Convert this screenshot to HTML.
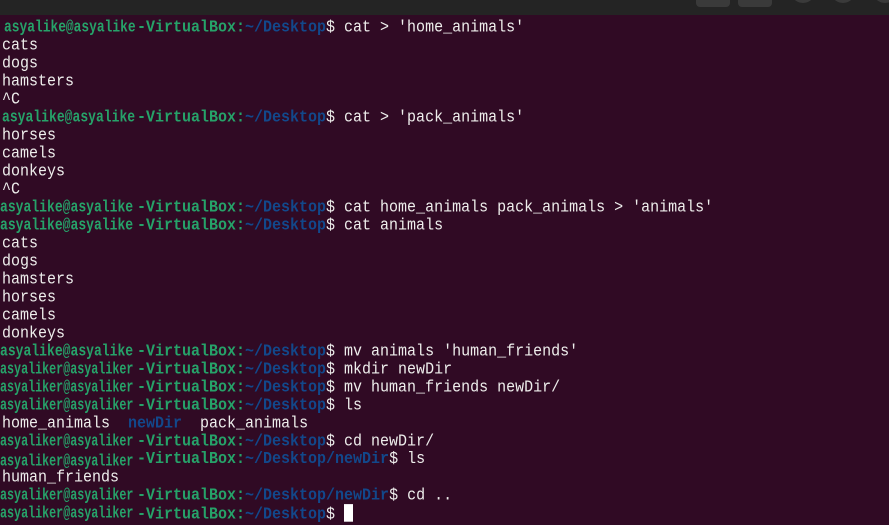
<!DOCTYPE html>
<html><head><meta charset="utf-8"><style>
html,body{margin:0;padding:0}
body{width:889px;height:523px;background:#300a24;overflow:hidden;position:relative;font-family:"Liberation Mono",monospace;font-size:15px;color:#eeeeec}
.bar{position:absolute;left:0;top:0;width:889px;height:15px;background:#242424}
.btn{position:absolute;top:-6px;height:13px;background:#3a3a3a;border-radius:4px}
.cir{position:absolute;top:-12px;width:20px;height:15px;border-radius:50%;background:#3a3a3a}
.l{position:absolute;left:2px;height:18px;line-height:18px;white-space:pre;transform:scaleY(1.1);transform-origin:0 50%}
.u{position:absolute;left:0;top:0;color:#26a269;font-weight:bold;font-size:15px;display:inline-block;transform-origin:0 50%}
.r{position:absolute;left:137px;top:0;white-space:pre}
.g{color:#26a269;font-weight:bold}
.b{color:#12488b;font-weight:bold}
.cur{display:inline-block;width:9px;height:16px;background:#fff;vertical-align:-3px}
</style></head><body>
<div class="bar"><div class="btn" style="left:696px;width:34px"></div><div class="btn" style="left:738px;width:34px"></div><div class="cir" style="left:793px"></div><div class="cir" style="left:833px"></div><div class="cir" style="left:875px"></div></div>

<div class="l" style="top:19px;left:0"><span class="u" style="left:4px;transform:scaleX(0.86)">asyalike@asyalike</span><span class="r"><span class="g">-VirtualBox:</span><span class="b">~/Desktop</span>$ cat &gt; 'home_animals'</span></div>
<div class="l" style="top:37px">cats</div>
<div class="l" style="top:55px">dogs</div>
<div class="l" style="top:73px">hamsters</div>
<div class="l" style="top:91px">^C</div>
<div class="l" style="top:109px;left:0"><span class="u" style="left:2px;transform:scaleX(0.87)">asyalike@asyalike</span><span class="r"><span class="g">-VirtualBox:</span><span class="b">~/Desktop</span>$ cat &gt; 'pack_animals'</span></div>
<div class="l" style="top:127px">horses</div>
<div class="l" style="top:145px">camels</div>
<div class="l" style="top:163px">donkeys</div>
<div class="l" style="top:181px">^C</div>
<div class="l" style="top:199px;left:0"><span class="u" style="transform:scaleX(0.87)">asyalike@asyalike</span><span class="r"><span class="g">-VirtualBox:</span><span class="b">~/Desktop</span>$ cat home_animals pack_animals &gt; 'animals'</span></div>
<div class="l" style="top:217px;left:0"><span class="u" style="transform:scaleX(0.87)">asyalike@asyalike</span><span class="r"><span class="g">-VirtualBox:</span><span class="b">~/Desktop</span>$ cat animals</span></div>
<div class="l" style="top:235px">cats</div>
<div class="l" style="top:253px">dogs</div>
<div class="l" style="top:271px">hamsters</div>
<div class="l" style="top:289px">horses</div>
<div class="l" style="top:307px">camels</div>
<div class="l" style="top:325px">donkeys</div>
<div class="l" style="top:343px;left:0"><span class="u" style="transform:scaleX(0.87)">asyalike@asyalike</span><span class="r"><span class="g">-VirtualBox:</span><span class="b">~/Desktop</span>$ mv animals 'human_friends'</span></div>
<div class="l" style="top:361px;left:0"><span class="u" style="transform:scaleX(0.78)">asyaliker@asyaliker</span><span class="r"><span class="g">-VirtualBox:</span><span class="b">~/Desktop</span>$ mkdir newDir</span></div>
<div class="l" style="top:379px;left:0"><span class="u" style="transform:scaleX(0.78)">asyaliker@asyaliker</span><span class="r"><span class="g">-VirtualBox:</span><span class="b">~/Desktop</span>$ mv human_friends newDir/</span></div>
<div class="l" style="top:397px;left:0"><span class="u" style="transform:scaleX(0.78)">asyaliker@asyaliker</span><span class="r"><span class="g">-VirtualBox:</span><span class="b">~/Desktop</span>$ ls</span></div>
<div class="l" style="top:415px">home_animals  <span class="b">newDir</span>  pack_animals</div>
<div class="l" style="top:433px;left:0"><span class="u" style="transform:scaleX(0.78)">asyaliker@asyaliker</span><span class="r"><span class="g">-VirtualBox:</span><span class="b">~/Desktop</span>$ cd newDir/</span></div>
<div class="l" style="top:453px;left:0"><span class="u" style="transform:scaleX(0.78)">asyaliker@asyaliker</span><span class="r" style="top:-2px"><span class="g">-VirtualBox:</span><span class="b">~/Desktop/newDir</span>$ ls</span></div>
<div class="l" style="top:469px">human_friends</div>
<div class="l" style="top:487px;left:0"><span class="u" style="transform:scaleX(0.78)">asyaliker@asyaliker</span><span class="r"><span class="g">-VirtualBox:</span><span class="b">~/Desktop/newDir</span>$ cd ..</span></div>
<div class="l" style="top:505px;left:0"><span class="u" style="transform:scaleX(0.78)">asyaliker@asyaliker</span><span class="r"><span class="g">-VirtualBox:</span><span class="b">~/Desktop</span>$ <span class="cur"></span></span></div>
</body></html>
